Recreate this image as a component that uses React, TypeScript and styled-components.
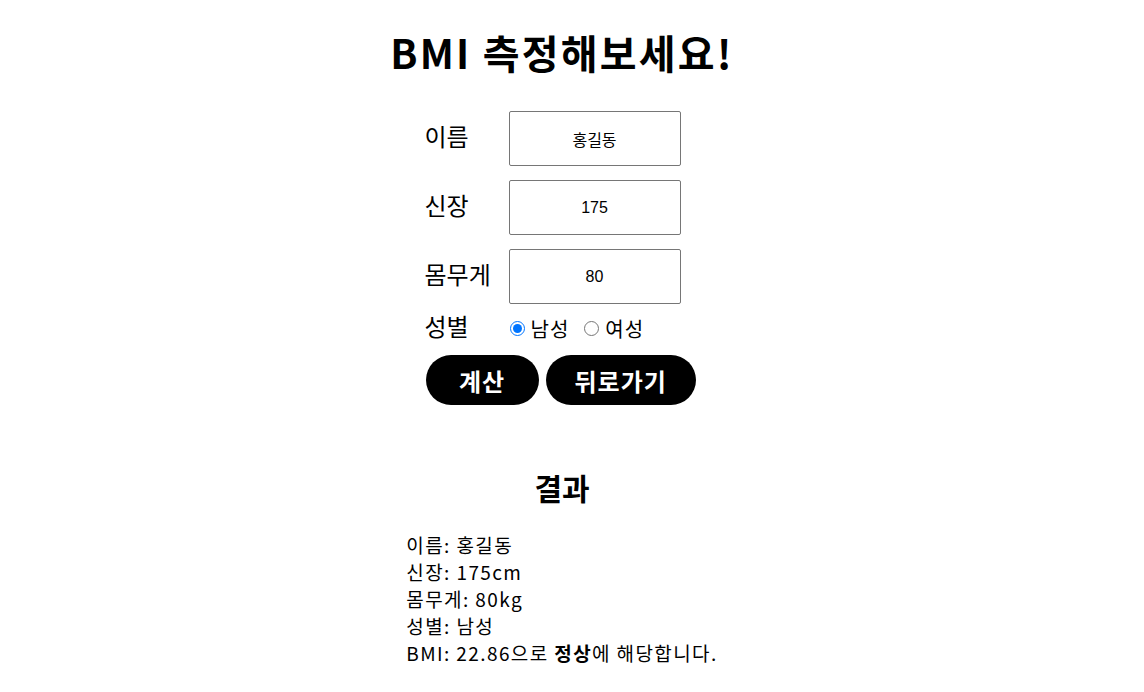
import React, { useState } from "react";
import styled, { createGlobalStyle } from "styled-components";

const Global = createGlobalStyle`
  html, body { margin: 0; padding: 0; background: #fff; }
  body { font-family: "Noto Sans CJK KR", "Noto Sans", sans-serif; color: #000; }
`;

const Page = styled.main`
  width: 1124px;
  display: flex;
  flex-direction: column;
  align-items: center;
  padding-top: 28px;
`;

const Title = styled.h1`
  margin: 0;
  font-size: 40px;
  line-height: 48px;
  font-weight: 700;
  letter-spacing: 2.2px;
`;

const Form = styled.form`
  margin-top: 35px;
  width: 271px;
  margin-right: 4px;
  display: flex;
  flex-direction: column;
  gap: 14px;
`;

const Row = styled.div`
  display: flex;
  align-items: center;
`;

const Label = styled.span`
  width: 84px;
  font-size: 24px;
  line-height: 30px;
  margin-top: -5px;
`;

const Input = styled.input`
  box-sizing: border-box;
  width: 172px;
  height: 55px;
  border: 1px solid #767676;
  border-radius: 2px;
  text-align: center;
  font-family: "Liberation Sans", "Noto Sans CJK KR", sans-serif;
  font-size: 16px;
  color: #000;
  padding: 0;
  outline: none;
`;

const RadioRow = styled(Row)`
  margin-top: -2px;
`;

const RadioLabel = styled.label`
  display: inline-flex;
  align-items: center;
  font-size: 20px;
  line-height: 24px;
  letter-spacing: 1px;
  margin-right: 14px;
`;

const Radio = styled.input`
  margin: 0 6px 0 1px;
  width: 15px;
  height: 15px;
`;

const Buttons = styled.div`
  display: flex;
  gap: 7px;
  margin-left: 1px;
`;

const Button = styled.button`
  flex: none;
  white-space: nowrap;
  height: 50px;
  min-width: 113px;
  padding: 0 29px;
  border: none;
  border-radius: 25px;
  background: #000;
  color: #fff;
  font-family: "Noto Sans CJK KR", sans-serif;
  font-size: 24px;
  letter-spacing: 1px;
  font-weight: 700;
  cursor: pointer;
`;

const Result = styled.section`
  margin-top: 62px;
  display: flex;
  flex-direction: column;
  align-items: center;
`;

const ResultTitle = styled.h2`
  margin: 0;
  font-size: 30px;
  line-height: 40px;
  font-weight: 700;
`;

const ResultBody = styled.div`
  margin-top: 24px;
  font-size: 19px;
  line-height: 27px;
  letter-spacing: 1.4px;
`;

const Line = styled.div``;

export default function App() {
  const [gender, setGender] = useState("남성");
  return (
    <>
      <Global />
      <Page>
        <Title>BMI 측정해보세요!</Title>
        <Form onSubmit={(e) => e.preventDefault()}>
          <Row>
            <Label>이름</Label>
            <Input defaultValue="홍길동" />
          </Row>
          <Row>
            <Label>신장</Label>
            <Input defaultValue="175" />
          </Row>
          <Row>
            <Label>몸무게</Label>
            <Input defaultValue="80" />
          </Row>
          <RadioRow>
            <Label>성별</Label>
            <RadioLabel>
              <Radio type="radio" name="g" checked={gender === "남성"} onChange={() => setGender("남성")} />
              남성
            </RadioLabel>
            <RadioLabel>
              <Radio type="radio" name="g" checked={gender === "여성"} onChange={() => setGender("여성")} />
              여성
            </RadioLabel>
          </RadioRow>
          <Buttons>
            <Button type="submit">계산</Button>
            <Button type="button">뒤로가기</Button>
          </Buttons>
        </Form>
        <Result>
          <ResultTitle>결과</ResultTitle>
          <ResultBody>
            <Line>이름: 홍길동</Line>
            <Line>신장: 175cm</Line>
            <Line>몸무게: 80kg</Line>
            <Line>성별: 남성</Line>
            <Line>
              BMI: 22.86으로 <b>정상</b>에 해당합니다.
            </Line>
          </ResultBody>
        </Result>
      </Page>
    </>
  );
}
